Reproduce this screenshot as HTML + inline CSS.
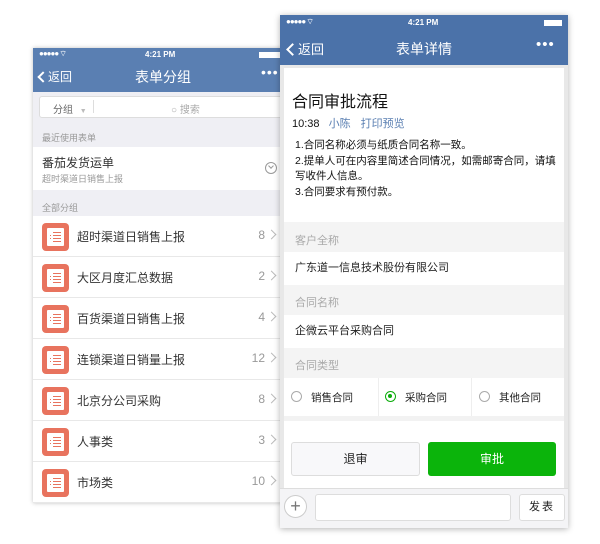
<!DOCTYPE html>
<html><head><meta charset="utf-8"><style>
*{margin:0;padding:0;box-sizing:border-box}
body{width:600px;height:544px;background:#fff;position:relative;overflow:hidden;font-family:"Liberation Sans","Noto Sans CJK SC",sans-serif;color:#222}
.abs{position:absolute}
.ph1{left:33px;top:48px;width:250px;height:455px;background:#efeff4;box-shadow:0 0 4px rgba(0,0,0,.25)}
.ph2{left:280px;top:15px;width:288px;height:513px;background:#e8e8e8;box-shadow:0 1px 6px rgba(0,0,0,.3)}
.status{font-size:8px;color:#fff;font-weight:bold}
.nav{color:#fff}
.row{position:absolute;left:0;width:250px;height:41px;background:#fff;border-bottom:1px solid #e8e8e8}
.ic{position:absolute;left:9px;top:7px;width:27px;height:28px;background:#e8735e;border-radius:4px}
.ic i{position:absolute;left:5px;top:5px;width:17px;height:18px;background:#fff;border-radius:1px}
.ic b{position:absolute;left:11px;height:1px;width:8px;background:#e8735e}
.ic s{position:absolute;left:8px;height:1px;width:1px;background:#e8735e}
.rt{position:absolute;left:44px;top:12px;font-size:12px;color:#333}
.cnt{position:absolute;right:18px;top:12px;font-size:12px;color:#999}
.chev{position:absolute;right:8px;top:15px;width:7px;height:7px;border-top:1px solid #bbb;border-right:1px solid #bbb;transform:rotate(45deg)}
.grey{position:absolute;left:4px;width:280px;background:#f4f4f4;font-size:11px;color:#aaa;padding-left:11px}
.white{position:absolute;left:4px;width:280px;background:#fff;font-size:11px;color:#222;padding-left:11px}
</style></head><body>

<!-- Left phone -->
<div class="abs ph1">
  <div class="abs" style="left:0;top:0;width:250px;height:44px;background:#5a7fb2"></div>
  <div class="abs status" style="left:6px;top:1px;letter-spacing:-1px">●●●●● <span style="font-size:8px">⌔</span></div>
  <div class="abs status" style="left:112px;top:2px">4:21 PM</div>
  <div class="abs" style="left:226px;top:4px;width:24px;height:6px;background:#fff"></div>
  <div class="abs nav" style="left:6px;top:20px;font-size:12px"><span style="display:inline-block;width:8px;height:8px;border-left:2px solid #fff;border-bottom:2px solid #fff;transform:rotate(45deg);margin-right:1px"></span>返回</div>
  <div class="abs nav" style="left:102px;top:19px;font-size:14px">表单分组</div>
  <div class="abs nav" style="left:228px;top:16px;font-size:14px;letter-spacing:1px">•••</div>
  <div class="abs" style="left:6px;top:48px;width:250px;height:22px;background:#fff;border:1px solid #ddd;border-radius:3px"></div>
  <div class="abs" style="left:20px;top:53px;font-size:10px;color:#666">分组 <span style="color:#bbb;font-size:7px;margin-left:4px">▼</span></div>
  <div class="abs" style="left:60px;top:52px;width:1px;height:13px;background:#ddd"></div>
  <div class="abs" style="left:138px;top:53px;font-size:10px;color:#aaa">○ 搜索</div>
  <div class="abs" style="left:9px;top:83px;font-size:9px;color:#999">最近使用表单</div>
  <div class="abs" style="left:0;top:99px;width:250px;height:43px;background:#fff"></div>
  <div class="abs" style="left:9px;top:106px;font-size:12px;color:#333">番茄发货运单</div>
  <div class="abs" style="left:9px;top:124px;font-size:9px;color:#999">超时渠道日销售上报</div>
  <div class="abs" style="left:232px;top:114px;width:12px;height:12px;border:1px solid #999;border-radius:50%"></div>
  <div class="abs" style="left:236px;top:116px;width:4px;height:4px;border-right:1px solid #999;border-bottom:1px solid #999;transform:rotate(45deg)"></div>
  <div class="abs" style="left:9px;top:153px;font-size:9px;color:#999">全部分组</div>
  <div class="row" style="top:168px"><div class="ic"><i></i><b style="top:9px"></b><b style="top:12px"></b><b style="top:15px"></b><b style="top:18px"></b><s style="top:12px"></s><s style="top:15px"></s></div><div class="rt">超时渠道日销售上报</div><div class="cnt">8</div><div class="chev"></div></div>
  <div class="row" style="top:209px"><div class="ic"><i></i><b style="top:9px"></b><b style="top:12px"></b><b style="top:15px"></b><b style="top:18px"></b><s style="top:12px"></s><s style="top:15px"></s></div><div class="rt">大区月度汇总数据</div><div class="cnt">2</div><div class="chev"></div></div>
  <div class="row" style="top:250px"><div class="ic"><i></i><b style="top:9px"></b><b style="top:12px"></b><b style="top:15px"></b><b style="top:18px"></b><s style="top:12px"></s><s style="top:15px"></s></div><div class="rt">百货渠道日销售上报</div><div class="cnt">4</div><div class="chev"></div></div>
  <div class="row" style="top:291px"><div class="ic"><i></i><b style="top:9px"></b><b style="top:12px"></b><b style="top:15px"></b><b style="top:18px"></b><s style="top:12px"></s><s style="top:15px"></s></div><div class="rt">连锁渠道日销量上报</div><div class="cnt">12</div><div class="chev"></div></div>
  <div class="row" style="top:332px"><div class="ic"><i></i><b style="top:9px"></b><b style="top:12px"></b><b style="top:15px"></b><b style="top:18px"></b><s style="top:12px"></s><s style="top:15px"></s></div><div class="rt">北京分公司采购</div><div class="cnt">8</div><div class="chev"></div></div>
  <div class="row" style="top:373px"><div class="ic"><i></i><b style="top:9px"></b><b style="top:12px"></b><b style="top:15px"></b><b style="top:18px"></b><s style="top:12px"></s><s style="top:15px"></s></div><div class="rt">人事类</div><div class="cnt">3</div><div class="chev"></div></div>
  <div class="row" style="top:414px"><div class="ic"><i></i><b style="top:9px"></b><b style="top:12px"></b><b style="top:15px"></b><b style="top:18px"></b><s style="top:12px"></s><s style="top:15px"></s></div><div class="rt">市场类</div><div class="cnt">10</div><div class="chev"></div></div>
</div>

<!-- Right phone -->
<div class="abs ph2">
  <div class="abs" style="left:0;top:0;width:288px;height:50px;background:#4b72a9"></div>
  <div class="abs status" style="left:6px;top:2px;letter-spacing:-1px">●●●●● ⌔</div>
  <div class="abs status" style="left:128px;top:3px">4:21 PM</div>
  <div class="abs" style="left:264px;top:5px;width:18px;height:6px;background:#fff"></div>
  <div class="abs nav" style="left:8px;top:24px;font-size:13px"><span style="display:inline-block;width:9px;height:9px;border-left:2px solid #fff;border-bottom:2px solid #fff;transform:rotate(45deg);margin-right:1px"></span>返回</div>
  <div class="abs nav" style="left:116px;top:24px;font-size:14px">表单详情</div>
  <div class="abs nav" style="left:256px;top:21px;font-size:15px;letter-spacing:1px">•••</div>
  <div class="abs" style="left:4px;top:53px;width:280px;height:154px;background:#fff"></div>
  <div class="abs" style="left:12px;top:73px;font-size:16px;color:#111">合同审批流程</div>
  <div class="abs" style="left:12px;top:100px;font-size:11px;color:#111">10:38 <span style="color:#5a7fb2;margin-left:6px">小陈</span><span style="color:#5a7fb2;margin-left:10px">打印预览</span></div>
  <div class="abs" style="left:15px;top:123px;font-size:10.5px;line-height:15.5px;color:#111;width:266px">1.合同名称必须与纸质合同名称一致。<br>2.提单人可在内容里简述合同情况，如需邮寄合同，请填写收件人信息。<br>3.合同要求有预付款。</div>
  <div class="grey" style="top:207px;height:30px;line-height:38px">客户全称</div>
  <div class="white" style="top:237px;height:33px;line-height:33px">广东道一信息技术股份有限公司</div>
  <div class="grey" style="top:270px;height:30px;line-height:36px">合同名称</div>
  <div class="white" style="top:300px;height:33px;line-height:33px">企微云平台采购合同</div>
  <div class="grey" style="top:333px;height:30px;line-height:36px">合同类型</div>
  <div class="white" style="top:363px;height:38px;padding:0"></div>
  <div class="abs" style="left:98px;top:363px;width:1px;height:38px;background:#eee"></div>
  <div class="abs" style="left:191px;top:363px;width:1px;height:38px;background:#eee"></div>
  <div class="abs" style="left:11px;top:376px;width:11px;height:11px;border:1px solid #aaa;border-radius:50%"></div>
  <div class="abs" style="left:31px;top:375px;font-size:10.5px">销售合同</div>
  <div class="abs" style="left:105px;top:376px;width:11px;height:11px;border:1.5px solid #0aac0a;border-radius:50%"><div style="margin:2px;width:4px;height:4px;border-radius:50%;background:#0aac0a"></div></div>
  <div class="abs" style="left:125px;top:375px;font-size:10.5px">采购合同</div>
  <div class="abs" style="left:199px;top:376px;width:11px;height:11px;border:1px solid #aaa;border-radius:50%"></div>
  <div class="abs" style="left:219px;top:375px;font-size:10.5px">其他合同</div>
  <div class="abs" style="left:4px;top:401px;width:280px;height:5px;background:#f2f2f2"></div>
  <div class="abs" style="left:4px;top:406px;width:280px;height:67px;background:#fff"></div>
  <div class="abs" style="left:11px;top:427px;width:129px;height:34px;background:#f8f8fa;border:1px solid #ddd;border-radius:3px;text-align:center;line-height:32px;font-size:12px">退审</div>
  <div class="abs" style="left:148px;top:427px;width:128px;height:34px;background:#0bb40b;border-radius:3px;text-align:center;line-height:34px;font-size:12px;color:#fff">审批</div>
  <div class="abs" style="left:0;top:473px;width:288px;height:40px;background:#f4f4f6;border-top:1px solid #ddd"></div>
  <div class="abs" style="left:4px;top:480px;width:23px;height:23px;border:1px solid #ccc;border-radius:50%;background:#fff;text-align:center;line-height:20px;font-size:18px;color:#777">+</div>
  <div class="abs" style="left:35px;top:479px;width:196px;height:27px;background:#fff;border:1px solid #ddd;border-radius:3px"></div>
  <div class="abs" style="left:239px;top:479px;width:46px;height:27px;background:#fff;border:1px solid #ddd;border-radius:3px;text-align:center;line-height:25px;font-size:11px;letter-spacing:2px">发表</div>
</div>

</body></html>
